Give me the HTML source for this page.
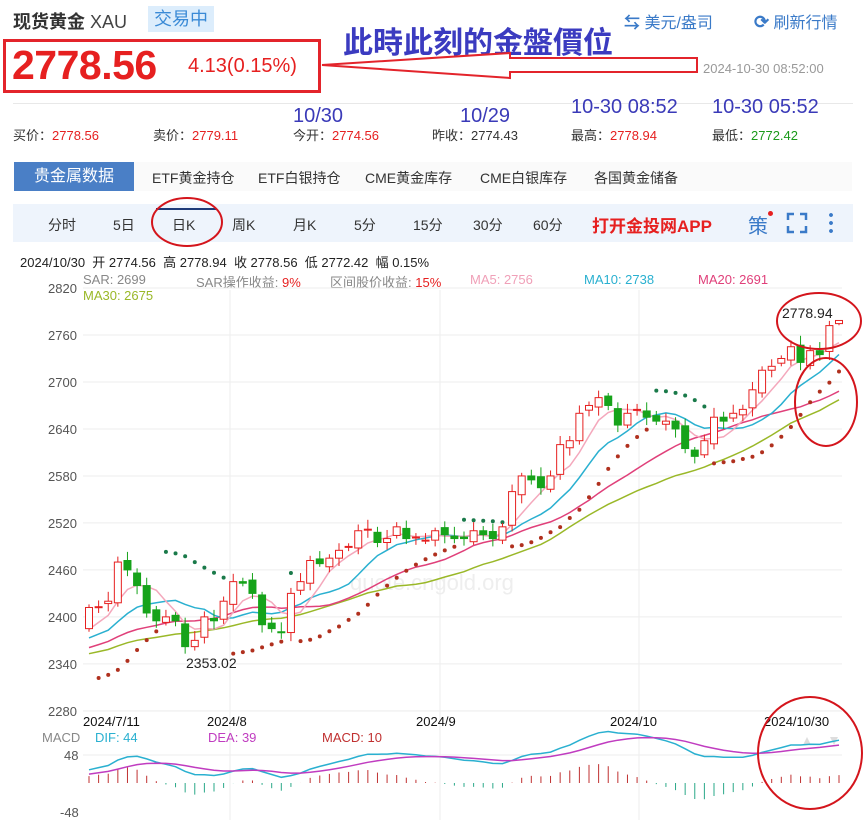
<!DOCTYPE html>
<html><head><meta charset="utf-8">
<style>
*{margin:0;padding:0;box-sizing:border-box}
body{width:868px;height:820px;background:#fff;font-family:"Liberation Sans","Noto Sans CJK SC",sans-serif;position:relative;overflow:hidden;color:#333}
.a{position:absolute;white-space:nowrap}
.red{color:#e62020}
.bl{color:#3a3ab8;font-size:20px}
</style></head><body>
<div class="a" style="left:13px;top:8px;font-size:18px;font-weight:bold;color:#333">现货黄金 <span style="font-weight:normal;color:#444">XAU</span></div>
<div class="a" style="left:148px;top:6px;width:66px;height:26px;background:#dcedfc;color:#3a8ad6;font-size:18px;line-height:26px;text-align:center">交易中</div>
<div class="a" style="left:624px;top:9px;font-size:16px;color:#3a7ac8"><span style="font-weight:bold">⇆</span> 美元/盎司</div>
<div class="a" style="left:754px;top:9px;font-size:16px;color:#3a7ac8"><span style="font-weight:bold;font-size:18px">⟳</span> 刷新行情</div>
<div class="a" style="left:343px;top:18px;font-size:30px;font-weight:bold;color:#3b3bc0">此時此刻的金盤價位</div>
<div class="a" style="left:3px;top:39px;width:318px;height:54px;border:3px solid #e3242b"></div>
<div class="a red" style="left:12px;top:42px;font-size:41px;font-weight:bold;letter-spacing:-0.5px">2778.56</div>
<div class="a red" style="left:188px;top:55px;font-size:20px">4.13(0.15%)</div>
<svg class="a" style="left:0;top:0" width="868" height="100"><polygon points="322,65 510,53 510,58 697,58 697,72 510,72 510,78" fill="#fff" stroke="#e3242b" stroke-width="2"/></svg>
<div class="a" style="left:703px;top:61px;font-size:13px;color:#999">2024-10-30 08:52:00</div>
<div class="a" style="left:13px;top:103px;width:840px;border-top:1px solid #e8e8e8"></div>
<div class="a bl" style="left:293px;top:105px">10/30</div>
<div class="a bl" style="left:460px;top:105px">10/29</div>
<div class="a bl" style="left:571px;top:96px">10-30 08:52</div>
<div class="a bl" style="left:712px;top:96px">10-30 05:52</div>
<div class="a" style="left:13px;top:125px;font-size:13px">买价：<span class="red">2778.56</span></div>
<div class="a" style="left:153px;top:125px;font-size:13px">卖价：<span class="red">2779.11</span></div>
<div class="a" style="left:293px;top:125px;font-size:13px">今开：<span class="red">2774.56</span></div>
<div class="a" style="left:432px;top:125px;font-size:13px">昨收：2774.43</div>
<div class="a" style="left:571px;top:125px;font-size:13px">最高：<span class="red">2778.94</span></div>
<div class="a" style="left:712px;top:125px;font-size:13px">最低：<span style="color:#1a9a1a">2772.42</span></div>
<div class="a" style="left:14px;top:162px;width:120px;height:29px;background:#4a7fc6;color:#fff;font-size:16px;line-height:29px;text-align:center">贵金属数据</div>
<div class="a" style="left:134px;top:162px;width:718px;height:29px;background:#fafafa"></div>
<div class="a" style="left:152px;top:168px;font-size:14px">ETF黄金持仓</div>
<div class="a" style="left:258px;top:168px;font-size:14px">ETF白银持仓</div>
<div class="a" style="left:365px;top:168px;font-size:14px">CME黄金库存</div>
<div class="a" style="left:480px;top:168px;font-size:14px">CME白银库存</div>
<div class="a" style="left:594px;top:168px;font-size:14px">各国黄金储备</div>
<div class="a" style="left:13px;top:204px;width:840px;height:38px;background:#eef4fc"></div>
<div class="a" style="left:156px;top:208px;width:60px;height:2px;background:#1e3a78"></div>
<div class="a" style="left:48px;top:215px;font-size:14px">分时</div>
<div class="a" style="left:113px;top:215px;font-size:14px">5日</div>
<div class="a" style="left:172px;top:215px;font-size:14px">日K</div>
<div class="a" style="left:232px;top:215px;font-size:14px">周K</div>
<div class="a" style="left:293px;top:215px;font-size:14px">月K</div>
<div class="a" style="left:354px;top:215px;font-size:14px">5分</div>
<div class="a" style="left:413px;top:215px;font-size:14px">15分</div>
<div class="a" style="left:473px;top:215px;font-size:14px">30分</div>
<div class="a" style="left:533px;top:215px;font-size:14px">60分</div>
<div class="a" style="left:592px;top:212px;font-size:17px;font-weight:bold;color:#e62020">打开金投网APP</div>
<div class="a" style="left:748px;top:210px;font-size:20px;color:#3a7ac8">策</div>
<div class="a" style="left:768px;top:211px;width:5px;height:5px;border-radius:3px;background:#e62020"></div>
<svg class="a" style="left:786px;top:212px" width="22" height="22" fill="none" stroke="#3a7ac8" stroke-width="2.5"><path d="M2 8V2H8M14 2H20V8M20 14V20H14M8 20H2V14"/></svg>
<div class="a" style="left:829px;top:211px;width:4px;height:22px;background:radial-gradient(circle,#3a7ac8 1.8px,transparent 2px) 0 0/4px 8px repeat-y"></div>
<div class="a" style="left:20px;top:252px;font-size:13px;color:#222">2024/10/30 &nbsp;开 2774.56 &nbsp;高 2778.94 &nbsp;收 2778.56 &nbsp;低 2772.42 &nbsp;幅 0.15%</div>
<div class="a" style="left:83px;top:272px;font-size:13px;color:#888">SAR: 2699</div>
<div class="a" style="left:196px;top:272px;font-size:13px;color:#888">SAR操作收益: <span class="red">9%</span></div>
<div class="a" style="left:330px;top:272px;font-size:13px;color:#888">区间股价收益: <span class="red">15%</span></div>
<div class="a" style="left:470px;top:272px;font-size:13px;color:#f0a0b8">MA5: 2756</div>
<div class="a" style="left:584px;top:272px;font-size:13px;color:#2ab0d0">MA10: 2738</div>
<div class="a" style="left:698px;top:272px;font-size:13px;color:#e0407a">MA20: 2691</div>
<div class="a" style="left:83px;top:288px;font-size:13px;color:#9ab828">MA30: 2675</div>
<svg id="c" class="a" style="left:0;top:0" width="868" height="820"></svg>
<script>
var s='',g=document.getElementById('c');
function Y(p){return 335+(2760-p)*0.783}
var L=83,R=842;
[2820,2760,2700,2640,2580,2520,2460,2400,2340,2280].forEach(function(p){var y=Y(p);s+='<line x1="'+L+'" x2="'+R+'" y1="'+y+'" y2="'+y+'" stroke="#eee"/>';s+='<text x="48" y="'+(y+5)+'" font-size="13" fill="#555">'+p+'</text>'});
[230,440,639].forEach(function(x){s+='<line x1="'+x+'" x2="'+x+'" y1="290" y2="820" stroke="#eee"/>'});
s+='<line x1="83" x2="842" y1="711" y2="711" stroke="#eee"/>';
s+='<text x="350" y="590" font-size="22" fill="#eee">quote.cngold.org</text>';
var pre=[2330,2335,2340,2332,2338,2345,2350,2342,2336,2330,2328,2335,2340,2348,2355,2360,2352,2345,2340,2350,2358,2365,2370,2362,2355,2360,2368,2375,2380,2385];
var cl=[2412,2413,2420,2470,2460,2440,2405,2395,2400,2395,2362,2370,2400,2395,2420,2445,2443,2430,2390,2385,2380,2430,2445,2472,2468,2475,2485,2490,2510,2512,2495,2500,2515,2500,2502,2498,2510,2505,2500,2500,2510,2505,2500,2515,2560,2580,2575,2565,2580,2620,2625,2660,2670,2680,2670,2645,2660,2665,2655,2650,2650,2640,2615,2605,2625,2655,2650,2660,2665,2690,2715,2720,2730,2745,2725,2740,2735,2772,2778.56];
var all=pre.concat(cl),P=pre.length,n=cl.length,dx=(839-89)/(n-1);
function X(i){return 89+i*dx}
var op=[],hi=[],lo=[];
for(var i=0;i<n;i++){var o=i==0?2385:all[P+i-1]+((i*7)%5-2)*2;op.push(o);var h=Math.max(o,cl[i])+4+(i*13)%9,l=Math.min(o,cl[i])-4-(i*11)%8;hi.push(h);lo.push(l)}
hi[n-1]=2778.94;op[n-1]=2774.56;lo[n-1]=2772.42;lo[10]=2353.02;
function ma(k,c){var d='';for(var i=0;i<n;i++){var t=0;for(var j=0;j<k;j++)t+=all[P+i-j];d+=(i?'L':'M')+X(i).toFixed(1)+' '+Y(t/k).toFixed(1)}s+='<path d="'+d+'" fill="none" stroke="'+c+'" stroke-width="1.5"/>'}
ma(30,'#9ab828');ma(20,'#e0407a');ma(10,'#2ab0d0');ma(5,'#f4a8bc');
var up=true,sar=2320,ep=hi[0],af=0.02;
for(var i=1;i<n;i++){sar=sar+af*(ep-sar);if(up){if(lo[i]<sar){up=false;sar=ep;ep=lo[i];af=0.02}else if(hi[i]>ep){ep=hi[i];af=Math.min(af+0.02,0.2)}}else{if(hi[i]>sar){up=true;sar=ep;ep=hi[i];af=0.02}else if(lo[i]<ep){ep=lo[i];af=Math.min(af+0.02,0.2)}}
s+='<circle cx="'+X(i)+'" cy="'+Y(sar)+'" r="2" fill="'+(up?'#b0301e':'#1a7a4a')+'"/>'}
for(var i=0;i<n;i++){var x=X(i),u=cl[i]>=op[i],c=u?'#e62020':'#16a31a',t=Y(Math.max(op[i],cl[i])),b=Y(Math.min(op[i],cl[i]));if(b-t<1)b=t+1;
s+='<line x1="'+x+'" x2="'+x+'" y1="'+Y(hi[i])+'" y2="'+Y(lo[i])+'" stroke="'+c+'"/>';
s+='<rect x="'+(x-3.5)+'" y="'+t+'" width="7" height="'+(b-t)+'" fill="'+(u?'#fff':c)+'" stroke="'+c+'"/>'}
s+='<text x="186" y="668" font-size="14" fill="#222">2353.02</text><text x="782" y="318" font-size="14" fill="#222">2778.94</text>';
[['2024/7/11',83],['2024/8',207],['2024/9',416],['2024/10',610],['2024/10/30',764]].forEach(function(a){s+='<text x="'+a[1]+'" y="726" font-size="13" fill="#111">'+a[0]+'</text>'});
s+='<text x="42" y="742" font-size="13" fill="#888">MACD</text><text x="95" y="742" font-size="13" fill="#2ab0d0">DIF: 44</text><text x="208" y="742" font-size="13" fill="#c03cc0">DEA: 39</text><text x="322" y="742" font-size="13" fill="#c03030">MACD: 10</text>';
s+='<text x="64" y="760" font-size="13" fill="#555">48</text><text x="60" y="817" font-size="13" fill="#555">-48</text>';
s+='<polygon points="803,745 811,745 807,737" fill="#ddd"/><polygon points="830,737 838,737 834,745" fill="#ddd"/>';
s+='<line x1="83" x2="842" y1="755" y2="755" stroke="#eee"/>';
var e12=all[0],e26=all[0],dea=0,D=[],E=[],M=[];
for(var k=0;k<all.length;k++){e12=e12+(all[k]-e12)*2/13;e26=e26+(all[k]-e26)*2/27;var dif=e12-e26;dea=dea+(dif-dea)*0.2;if(k>=P){D.push(dif);E.push(dea);M.push(2*(dif-dea))}}
function MY(v){return 783-v*1.0}
var dd='',de='';
for(var i=0;i<n;i++){var x=X(i);dd+=(i?'L':'M')+x.toFixed(1)+' '+MY(D[i]).toFixed(1);de+=(i?'L':'M')+x.toFixed(1)+' '+MY(E[i]).toFixed(1);
s+='<line x1="'+x+'" x2="'+x+'" y1="'+MY(0)+'" y2="'+MY(M[i]*0.8)+'" stroke="'+(M[i]>=0?'#c03030':'#2aa888')+'"/>'}
s+='<path d="'+dd+'" fill="none" stroke="#2ab0d0" stroke-width="1.5"/><path d="'+de+'" fill="none" stroke="#c03cc0" stroke-width="1.5"/>';
s+='<ellipse cx="187" cy="222" rx="35" ry="24" fill="none" stroke="#d4151c" stroke-width="2"/>';
s+='<ellipse cx="819" cy="321" rx="42" ry="28" fill="none" stroke="#d4151c" stroke-width="2"/>';
s+='<ellipse cx="826" cy="402" rx="31" ry="44" fill="none" stroke="#d4151c" stroke-width="2"/>';
s+='<ellipse cx="810" cy="753" rx="52" ry="56" fill="none" stroke="#d4151c" stroke-width="2"/>';
g.innerHTML=s;
</script>
</body></html>
